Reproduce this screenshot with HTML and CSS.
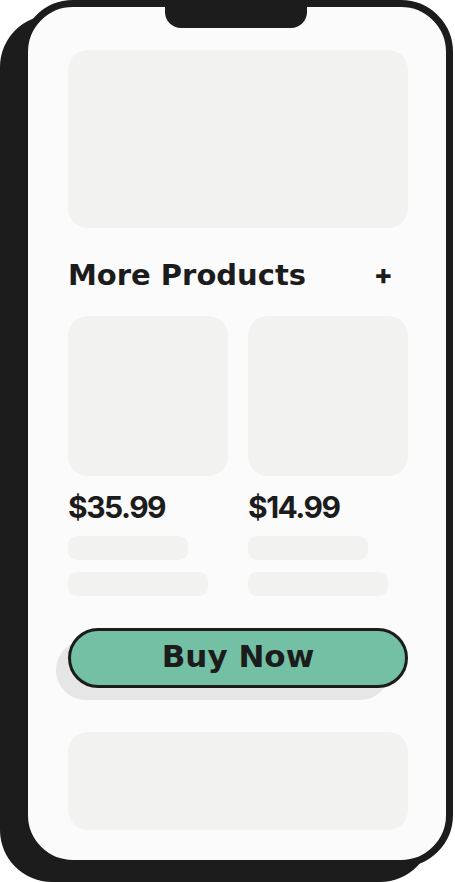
FILE: index.html
```html
<!DOCTYPE html>
<html>
<head>
<meta charset="utf-8">
<link rel="stylesheet" href="styles.css">
</head>
<body>
<div class="stage">
  <div class="phone-back"></div>
  <div class="phone">
    <div class="notch"></div>
    <div class="hero ph"></div>
    <div class="section-head">
      <h2 class="title">More Products</h2>
      <span class="plus">+</span>
    </div>
    <div class="products">
      <div class="product">
        <div class="thumb ph"></div>
        <div class="price">$35.99</div>
        <div class="line short ph"></div>
        <div class="line long ph"></div>
      </div>
      <div class="product">
        <div class="thumb ph"></div>
        <div class="price">$14.99</div>
        <div class="line short ph"></div>
        <div class="line long ph"></div>
      </div>
    </div>
    <div class="buy-wrap">
      <div class="buy-shadow"></div>
      <button class="buy">Buy Now</button>
    </div>
    <div class="footer ph"></div>
  </div>
</div>
</body>
</html>
```

FILE: styles.css
```css
html, body {
  margin: 0;
  padding: 0;
  background: #ffffff;
}
body {
  width: 455px;
  height: 882px;
  overflow: hidden;
  font-family: "DejaVu Sans", sans-serif;
  color: #1c1c1c;
}
.stage {
  position: relative;
  width: 455px;
  height: 882px;
}
.phone-back {
  position: absolute;
  left: 0;
  top: 15px;
  width: 432px;
  height: 867px;
  border-radius: 52px;
  background: #1c1c1c;
}
.phone {
  position: relative;
  box-sizing: border-box;
  margin-left: 21px;
  width: 432px;
  height: 867px;
  border: 7px solid #1c1c1c;
  border-radius: 52px;
  background: #fbfbfb;
  padding: 43px 38px 0 40px;
  display: flex;
  flex-direction: column;
}
.notch {
  position: absolute;
  left: 137px;
  top: -7px;
  width: 142px;
  height: 28px;
  background: #1c1c1c;
  border-radius: 0 0 16px 16px;
}
.ph {
  background: #f2f2f1;
}
.hero {
  height: 178px;
  border-radius: 20px;
}
.section-head {
  margin-top: 30px;
  height: 34px;
  display: flex;
  align-items: center;
  justify-content: space-between;
  padding-right: 15px;
}
.title {
  margin: 0;
  font-family: "DejaVu Sans", sans-serif;
  font-size: 29px;
  font-weight: 700;
  line-height: 34px;
}
.plus {
  font-family: Inter, "Noto Sans", sans-serif;
  font-size: 28px;
  font-weight: 800;
  line-height: 34px;
}
.products {
  margin-top: 24px;
  display: grid;
  grid-template-columns: 160px 160px;
  column-gap: 20px;
}
.product {
  display: flex;
  flex-direction: column;
}
.thumb {
  height: 160px;
  border-radius: 20px;
}
.price {
  margin-top: 13px;
  font-family: Inter, "Noto Sans", sans-serif;
  font-size: 30px;
  font-weight: 700;
  line-height: 36px;
  letter-spacing: -1.5px;
}
.line {
  height: 24px;
  border-radius: 9px;
}
.line.short {
  margin-top: 11px;
  width: 120px;
}
.line.long {
  margin-top: 12px;
  width: 140px;
}
.buy-wrap {
  position: relative;
  margin-top: 32px;
  height: 60px;
}
.buy-shadow {
  position: absolute;
  left: -12px;
  top: 12px;
  width: 334px;
  height: 60px;
  border-radius: 30px;
  background: #e6e6e6;
}
.buy {
  position: relative;
  box-sizing: border-box;
  width: 340px;
  height: 60px;
  border: 3px solid #1c1c1c;
  border-radius: 30px;
  background: #74c0a4;
  font-family: "DejaVu Sans", sans-serif;
  font-size: 31px;
  font-weight: 700;
  color: #1c1c1c;
  padding: 0 0 4px 0;
  line-height: 1;
}
.footer {
  margin-top: 44px;
  height: 98px;
  border-radius: 20px;
}
```
